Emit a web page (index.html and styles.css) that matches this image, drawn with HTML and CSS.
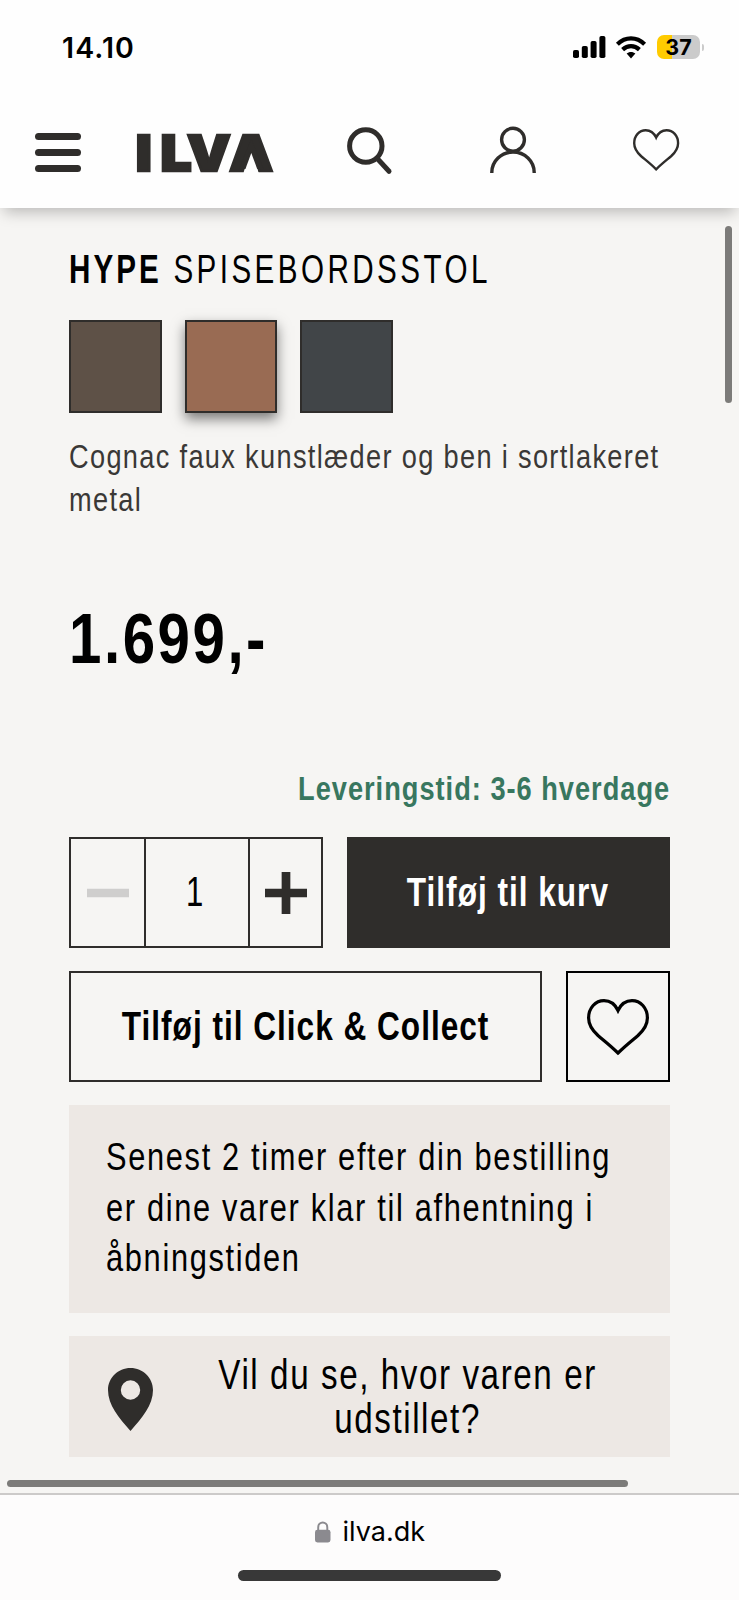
FILE: index.html
```html
<!DOCTYPE html>
<html lang="da">
<head>
<meta charset="utf-8">
<title>ILVA – HYPE spisebordsstol</title>
<link rel="stylesheet" href="styles.css">
</head>
<body>
<div class="screen">
  <header class="top">
    <div class="status">
      <span class="time">14.10</span>
      <div class="status-icons">
        <svg class="signal" viewBox="0 0 33 22"><rect x="0" y="14" width="6" height="8" rx="1.8"/><rect x="8.8" y="10" width="6" height="12" rx="1.8"/><rect x="17.6" y="5" width="6" height="17" rx="1.8"/><rect x="26.4" y="0" width="6" height="22" rx="1.8"/></svg>
        <svg class="wifi" viewBox="0 0 30 23"><g fill="none" stroke="#000" stroke-width="4.2"><path d="M1.4 8.2C9.4 .4 20.6 .4 28.6 8.2"/><path d="M6.6 13.6C11.6 8.9 18.4 8.9 23.4 13.6"/></g><path d="M10.6 17.6C13 15.4 17 15.4 19.4 17.6L15 22.6Z"/></svg>
        <div class="battery"><span>37</span></div>
      </div>
    </div>
    <nav class="nav">
      <div class="burger"><i></i><i></i><i></i></div>
      <svg class="logo" viewBox="0 0 140 40"><text transform="scale(1.1 1)" x="0.7 23.2 47.3 85.7" y="38">ILVA</text><path class="fill" d="M116.300 6L104 36H128.500Z"/><path class="notch" d="M116.300 20L108.600 41H124Z"/></svg>
      <svg class="search" viewBox="0 0 44 48"><circle cx="18.8" cy="19" r="16.2"/><path d="M30.5 31.8L42 44.3"/></svg>
      <svg class="user" viewBox="0 0 46 46"><circle cx="23" cy="12.7" r="11.4"/><path d="M1.8 46V45.500A21.2 20.500 0 0 1 44.200 45.500V46"/></svg>
      <svg class="heart-s" viewBox="0 0 62 56"><path d="M31 11.500C28 5 23 1.600 17 1.600C8.500 1.600 1.600 9 1.600 19C1.600 26 5.500 31.500 11 36.500C17.500 42 24 47 31 54C38 47 44.500 42 51 36.500C56.500 31.500 60.400 26 60.400 19C60.400 9 53.500 1.600 45 1.600C39 1.600 34 5 31 11.500Z"/></svg>
    </nav>
  </header>

  <main class="product">
    <h1 class="title"><b>HYPE</b> SPISEBORDSSTOL</h1>
    <div class="swatches">
      <span class="swatch brown"></span>
      <span class="swatch cognac"></span>
      <span class="swatch slate"></span>
    </div>
    <p class="desc">Cognac faux kunstlæder og ben i sortlakeret<br>metal</p>
    <p class="price">1.699,-</p>
    <div class="delivery"><p>Leveringstid: 3-6 hverdage</p></div>
    <div class="buttons">
      <div class="row">
        <div class="stepper">
          <span class="step"><svg viewBox="0 0 42 42"><path stroke="#cfcecd" d="M0 21H42"/></svg></span>
          <span class="qty"><em>1</em></span>
          <span class="step"><svg viewBox="0 0 42 42"><path stroke="#2f2d2b" d="M0 21H42M21 0V42"/></svg></span>
        </div>
        <button class="btn dark"><span>Tilføj til kurv</span></button>
      </div>
      <div class="row">
        <button class="btn outline"><span>Tilføj til Click &amp; Collect</span></button>
        <button class="btn fav"><svg class="heart-l" viewBox="0 0 62 56"><path d="M31 11.500C28 5 23 1.600 17 1.600C8.500 1.600 1.600 9 1.600 19C1.600 26 5.500 31.500 11 36.500C17.500 42 24 47 31 54C38 47 44.500 42 51 36.500C56.500 31.500 60.400 26 60.400 19C60.400 9 53.500 1.600 45 1.600C39 1.600 34 5 31 11.500Z"/></svg></button>
      </div>
      <div class="info"><p>Senest 2 timer efter din bestilling<br>er dine varer klar til afhentning i<br>åbningstiden</p></div>
      <div class="where">
        <svg class="pin" viewBox="0 0 45 63"><path fill-rule="evenodd" d="M22.500 0C35 0 45 9.800 45 22C45 37 34 50 22.500 63C11 50 0 37 0 22C0 9.800 10 0 22.500 0ZM22.500 12.300A9.700 9.700 0 1 0 22.500 31.700A9.700 9.700 0 1 0 22.500 12.300Z"/></svg>
        <div class="where-text"><p>Vil du se, hvor varen er<br>udstillet?</p></div>
      </div>
    </div>
  </main>

  <div class="scroll-v"></div>
  <div class="scroll-h"></div>

  <footer class="bottom">
    <div class="address">
      <svg class="lock" viewBox="0 0 16 22"><rect x="0" y="9" width="16" height="13" rx="2.500"/><path d="M3.300 10V6.500C3.300 -.3 12.700 -.3 12.700 6.500V10"/></svg>
      <span>ilva.dk</span>
    </div>
    <div class="home"></div>
  </footer>
</div>
</body>
</html>
```
FILE: styles.css
```css
* { box-sizing: border-box; margin: 0; padding: 0; }
body { width: 739px; height: 1600px; overflow: hidden; font-family: "Liberation Sans", Arial, sans-serif; color: #000; }
svg { display: block; flex: none; overflow: visible; }
.screen { position: relative; display: flex; flex-direction: column; width: 739px; height: 1600px; background: #f6f5f3; overflow: hidden; }

.top { height: 208px; flex: none; background: #fefefe; box-shadow: 0 8px 14px -4px rgba(0, 0, 0, .25); }
.status { display: flex; justify-content: space-between; align-items: center; height: 94px; padding: 0 35px 0 62px; font-family: Inter, sans-serif; }
.time { font-size: 28.5px; font-weight: 600; letter-spacing: 1.100px; }
.status-icons { display: flex; align-items: center; }
.signal { width: 33px; height: 22px; margin-right: 10px; }
.wifi { width: 30px; height: 23px; margin-right: 11px; }
.battery { position: relative; width: 43px; height: 24px; margin-right: 4px; border-radius: 7px; background: linear-gradient(90deg, #ffcb00 15.5px, #cbcbcb 15.5px); font-size: 21.500px; font-weight: 650; line-height: 25px; text-align: center; }
.battery::after { content: ""; position: absolute; left: 44.500px; top: 9px; width: 2.500px; height: 7px; border-radius: 0 3px 3px 0; background: #cbcbcb; }

.nav { display: flex; align-items: flex-start; height: 114px; padding: 33px 0 0 35px; }
.burger { display: flex; flex-direction: column; gap: 9.200px; width: 46px; margin: 6px 54px 0 0; }
.burger i { height: 7px; border-radius: 3.500px; background: #2f2d2b; }
.logo { width: 140px; height: 40px; margin: 6px 72px 0 0; }
.logo text { font: 900 50px Inter, sans-serif; fill: #2f2d2b; stroke: #2f2d2b; stroke-width: 2.500; }
.logo .fill { fill: #2f2d2b; }
.logo .notch { fill: #fefefe; }
.search { width: 44px; height: 48px; margin-right: 98.700px; fill: none; stroke: #2f2d2b; stroke-width: 5; stroke-linecap: round; }
.user { width: 46px; height: 46px; margin-right: 97px; fill: none; stroke: #2f2d2b; stroke-width: 3.400; }
.heart-s { width: 46.300px; height: 41.800px; margin-top: 2.300px; fill: none; stroke: #2f2d2b; stroke-width: 3.200; }

/* Condensed lettering: each text block is squeezed horizontally. */
.title, .desc, .price, .delivery p, .btn span, .info p, .where p { width: max-content; white-space: nowrap; transform: scaleX(.79); transform-origin: 0 50%; }

.product { flex: none; height: 1285px; padding: 36px 69.300px 0 69.300px; }
.title { font-size: 40px; line-height: 50px; font-weight: 400; letter-spacing: 4.650px; transform: scaleX(.74); }
.title b { letter-spacing: 4.100px; }
.swatches { display: flex; gap: 23px; margin-top: 26px; }
.swatch { width: 92.500px; height: 92.500px; border: 2px solid #2f2d2b; }
.brown { background: #5e5147; }
.cognac { background: #996b53; box-shadow: 0 6px 12px rgba(0, 0, 0, .5); }
.slate { background: #414548; }
.desc { margin-top: 22px; font-size: 34px; line-height: 43.800px; letter-spacing: 1.650px; color: #3a3836; transform: scaleX(.8); }
.price { margin-top: 77px; font-size: 71px; line-height: 80px; font-weight: 700; letter-spacing: 3.100px; transform: scaleX(.82); }
.delivery { display: flex; justify-content: flex-end; margin-top: 87px; }
.delivery p { font-size: 34px; line-height: 44px; font-weight: 700; letter-spacing: 1.250px; color: #38775f; transform: scaleX(.8); transform-origin: 100% 50%; }
.buttons { display: flex; flex-direction: column; gap: 23px; margin-top: 27px; }
.row { display: flex; gap: 23.300px; height: 111px; }
.stepper { display: grid; grid-template-columns: 73px 105.500px 71.500px; width: 254px; border: 2px solid #2f2d2b; }
.step, .qty { display: flex; align-items: center; justify-content: center; }
.step svg { width: 42px; height: 42px; stroke-width: 8.700; }
.qty { border: solid #2f2d2b; border-width: 0 2px; }
.qty em { font-size: 42px; font-style: normal; transform: translate(-2px, -1px) scaleX(.74); }
.btn { display: flex; align-items: center; justify-content: center; flex: 1; min-width: 0; background: none; border: 2px solid #2f2d2b; font: 700 40px/50px "Liberation Sans", Arial, sans-serif; color: #000; }
.btn span { margin-top: -1px; letter-spacing: 1.250px; transform-origin: 50% 50%; }
.dark { background: #2f2d2b; color: #fff; }
.fav { flex: none; width: 104px; border-color: #000; }
.heart-l { width: 62px; height: 56px; fill: none; stroke: #000; stroke-width: 3.200; }
.info { height: 207.700px; padding: 26.800px 0 0 37px; background: #ede8e4; }
.info p { font-size: 39px; line-height: 50.700px; letter-spacing: 2.100px; }
.where { display: flex; align-items: center; height: 121.700px; padding-left: 38.500px; background: #ede8e4; }
.pin { width: 45px; height: 63px; margin-top: 6px; fill: #2f2d2b; }
.where-text { display: flex; justify-content: center; width: 508px; margin: 1.500px 0 0 1px; }
.where p { flex: none; font-size: 42px; line-height: 44.300px; letter-spacing: 2px; text-align: center; transform-origin: 50% 50%; }

.scroll-v, .scroll-h { position: absolute; border-radius: 4px; background: #7c7b79; }
.scroll-v { left: 725px; top: 226px; width: 7px; height: 177px; }
.scroll-h { left: 7px; top: 1480px; width: 621px; height: 7px; }

.bottom { display: flex; flex-direction: column; align-items: center; flex: 1; border-top: 2px solid #cccac9; background: #fdfcfc; }
.address { display: flex; align-items: center; gap: 12px; height: 75px; padding: 0 0 2px 1px; font: 27px/36px Inter, sans-serif; }
.lock { width: 15.500px; height: 21.500px; fill: #8b8a8f; }
.lock path { fill: none; stroke: #8b8a8f; stroke-width: 2; }
.home { width: 263px; height: 11px; border-radius: 6px; background: #383838; }
```
